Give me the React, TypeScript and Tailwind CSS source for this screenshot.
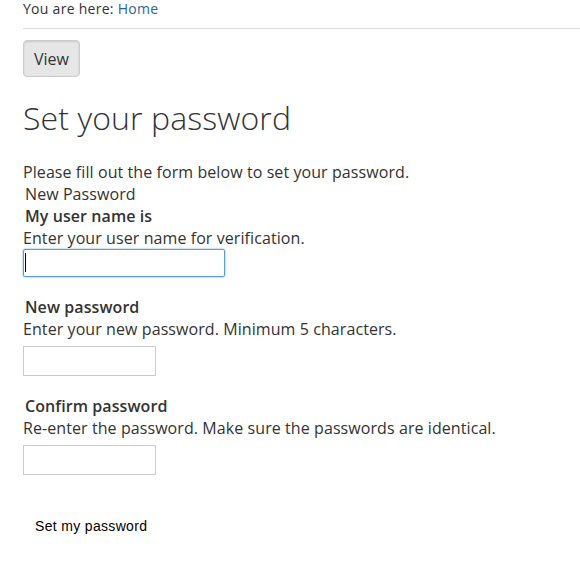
import { useEffect, useRef } from 'react'

const sans = { fontFamily: '"Open Sans", "Noto Sans", sans-serif' }

export default function App() {
  const userRef = useRef<HTMLInputElement>(null)

  useEffect(() => {
    userRef.current?.focus()
  }, [])

  return (
    <div className="min-h-screen bg-white text-[#333]" style={sans}>
      {/* Breadcrumb */}
      <div className="ml-[23px] -mt-[2px] border-b border-[#dddddd] pb-[9px] text-[14px] leading-[21px] tracking-[0.28px]">
        You are here: <a href="#" className="text-[#2a6496]">Home</a>
      </div>

      <div className="px-[23px]">
        <button
          type="button"
          className="mt-[11px] h-[37px] rounded-[4px] border border-[#cccccc] bg-[#e6e6e6] px-[10px] text-[16px] leading-none text-[#333] shadow-[inset_0_1px_2px_rgba(0,0,0,0.12)]"
        >
          View
        </button>

        <h1 className="mt-[21px] text-[32px] font-light leading-[40px] tracking-[0.1px]">Set your password</h1>

        <form className="mt-[23px] text-[16px] leading-[22px] tracking-[0.08px]" onSubmit={(e) => e.preventDefault()}>
          <p>Please fill out the form below to set your password.</p>
          <fieldset>
            <legend className="pl-[2px]">New Password</legend>

            <label className="block pl-[2px] font-semibold">My user name is</label>
            <div>Enter your user name for verification.</div>
            <div className="relative w-[202px]">
              <input
                ref={userRef}
                type="text"
                className="block h-[28px] w-[202px] rounded-[2px] border border-[#5b9dd9] px-[4px] text-[14px] outline-none shadow-[0_0_2px_rgba(30,140,190,0.8)] caret-transparent"
              />
              <span className="pointer-events-none absolute left-[2px] top-[4px] h-[19px] w-px bg-black" />
            </div>

            <label className="mt-[19px] block pl-[2px] font-semibold">New password</label>
            <div>Enter your new password. Minimum 5 characters.</div>
            <input type="password" className="mt-[6px] block h-[30px] w-[133px] border border-[#cccccc] outline-none" />

            <label className="mt-[19px] block pl-[2px] font-semibold">Confirm password</label>
            <div>Re-enter the password. Make sure the passwords are identical.</div>
            <input type="password" className="mt-[6px] block h-[30px] w-[133px] border border-[#cccccc] outline-none" />
          </fieldset>

          <button
            type="submit"
            className="mt-[35px] px-[12px] py-[6px] text-[14px] leading-[20px] tracking-[0.33px] text-black"
            style={{ fontFamily: '"Liberation Sans", Arial, sans-serif' }}
          >
            Set my password
          </button>
        </form>
      </div>
    </div>
  )
}
